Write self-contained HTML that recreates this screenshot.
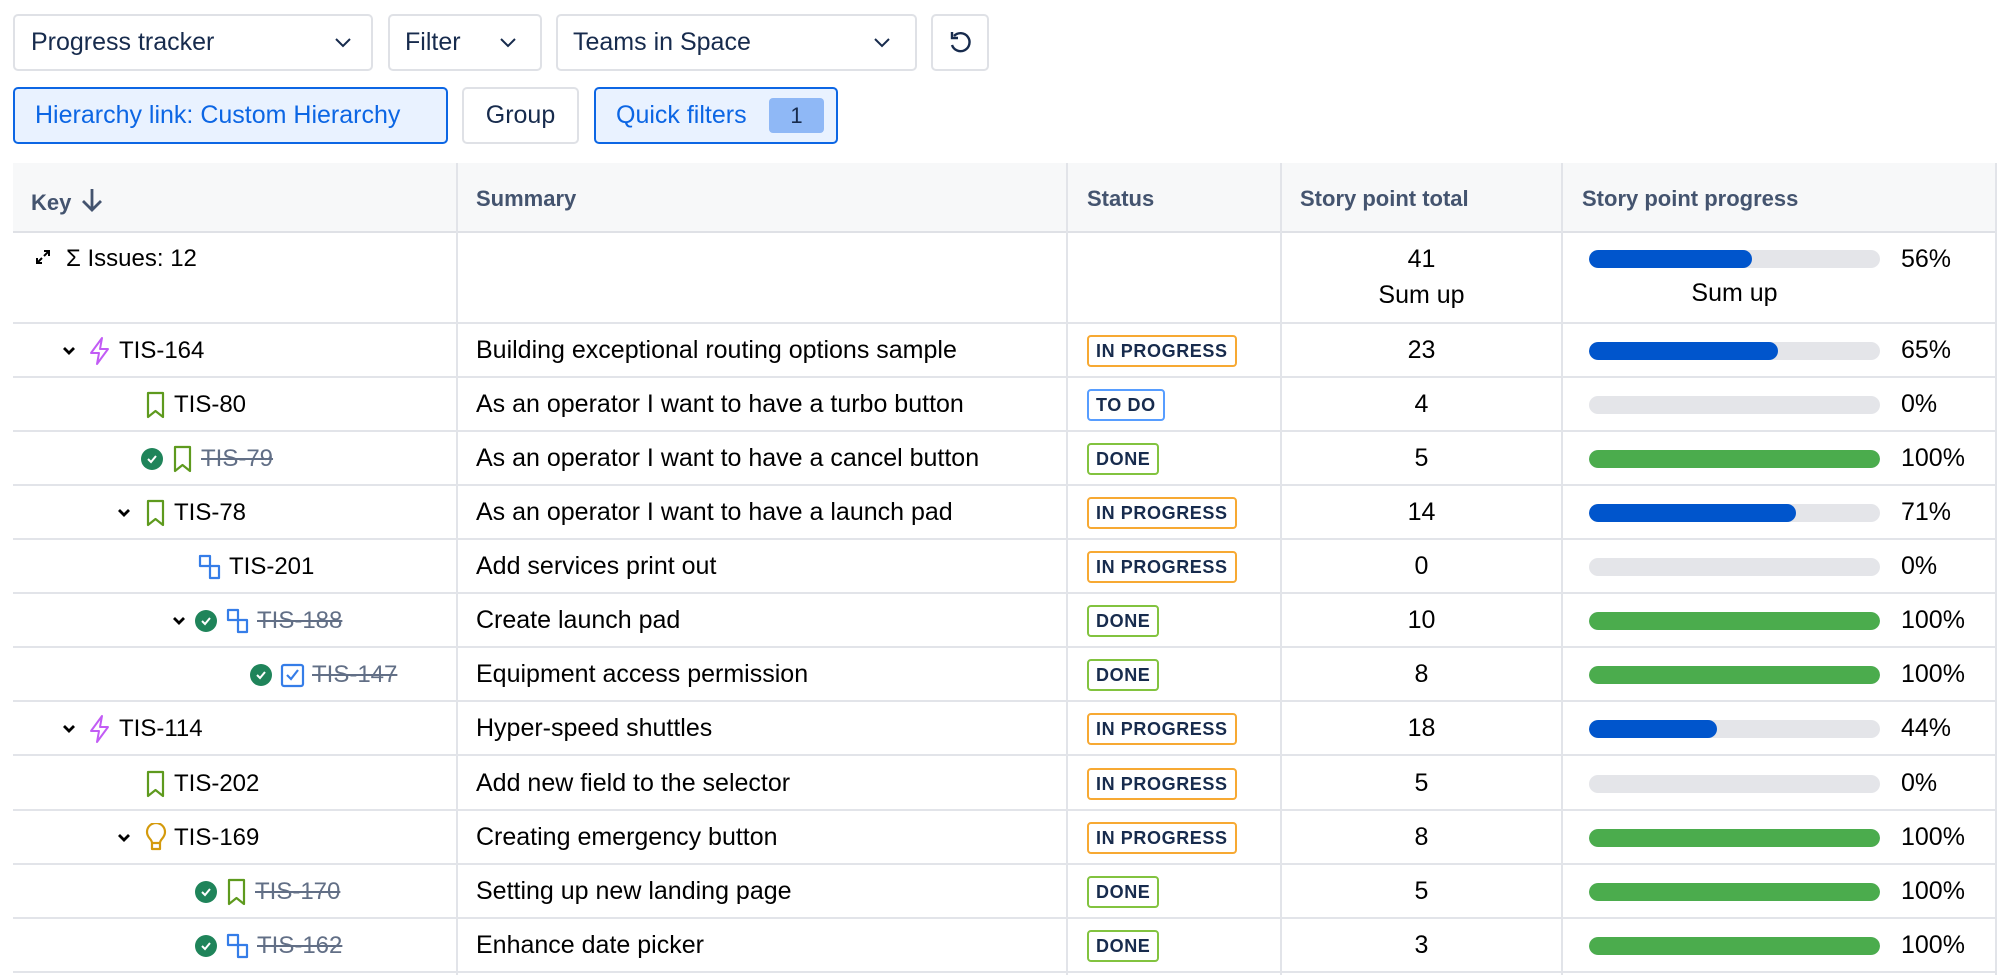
<!DOCTYPE html>
<html><head><meta charset="utf-8"><style>
*{box-sizing:border-box;margin:0;padding:0}
body{width:2000px;height:979px;background:#fff;font-family:"Liberation Sans",sans-serif;color:#172b4d;position:relative;overflow:hidden}
.btn{position:absolute;border:2px solid #dfe1e6;border-radius:5px;background:#fff;font-size:25px;display:flex;align-items:center;color:#172b4d}
.btn svg{position:absolute}
.sel{background:#e9f2ff;border:2px solid #0c66e4;color:#0c66e4}
.hdr{position:absolute;left:13px;top:163px;width:1983px;height:70px;background:#f7f8f9;border-bottom:2px solid #dfe1e6}
.ht{position:absolute;top:186px;font-weight:bold;font-size:22px;color:#44546f}
.vl{position:absolute;top:163px;height:812px;width:2px;background:#e2e4e9}
.r{position:absolute;left:13px;width:1983px;height:54px;border-bottom:2px solid #e2e4e9}
.r>*{position:absolute}
.k{display:flex;align-items:center;top:12px;font-size:24px;color:#000;white-space:nowrap}
.k .ck{margin-right:8px}
.k .ic{margin-right:6px}
.k s{color:#626f86}
.cv{top:18px}
.sm{left:463px;top:12px;font-size:25px;color:#000}
.lz{left:1074px;top:11px;height:32px;border:2px solid;border-radius:4px;font-weight:bold;font-size:18px;letter-spacing:.6px;padding:0 7px;display:flex;align-items:center;color:#172b4d}
.ip{border-color:#f7a933}.td{border-color:#579dff}.dn{border-color:#82c33f}
.n{left:1268px;width:281px;text-align:center;top:12px;font-size:25px;color:#000}
.bar{left:1576px;top:18px;width:291px;height:18px;border-radius:9px;background:#e4e5e9;overflow:hidden}
.bar i{display:block;height:100%;border-radius:9px}
.b{background:#0055cc}.g{background:#4bac4d}
.p{left:1888px;top:12px;font-size:25px;color:#000}
</style></head><body>
<div class="btn" style="left:13px;top:14px;width:360px;height:57px;padding-left:16px">Progress tracker<svg style="left:318px;top:20px" width="20" height="14" viewBox="0 0 20 14"><path d="M3 3l7 7 7-7" stroke="#172b4d" stroke-width="2" fill="none"/></svg></div>
<div class="btn" style="left:388px;top:14px;width:154px;height:57px;padding-left:15px">Filter<svg style="left:108px;top:20px" width="20" height="14" viewBox="0 0 20 14"><path d="M3 3l7 7 7-7" stroke="#172b4d" stroke-width="2" fill="none"/></svg></div>
<div class="btn" style="left:556px;top:14px;width:361px;height:57px;padding-left:15px">Teams in Space<svg style="left:314px;top:20px" width="20" height="14" viewBox="0 0 20 14"><path d="M3 3l7 7 7-7" stroke="#172b4d" stroke-width="2" fill="none"/></svg></div>
<div class="btn" style="left:931px;top:14px;width:58px;height:57px"><svg style="left:13px;top:13px" width="28" height="28" viewBox="0 0 28 28"><path d="M8 7A9 9 0 1 1 6 16" stroke="#172b4d" stroke-width="2.4" fill="none"/><path d="M6 3v6h6" stroke="#172b4d" stroke-width="2.4" fill="none"/></svg></div>
<div class="btn sel" style="left:13px;top:87px;width:435px;height:57px;padding-left:20px">Hierarchy link: Custom Hierarchy</div>
<div class="btn" style="left:462px;top:87px;width:117px;height:57px;justify-content:center">Group</div>
<div class="btn sel" style="left:594px;top:87px;width:244px;height:57px;padding-left:20px">Quick filters<div style="position:absolute;left:173px;top:9px;width:55px;height:35px;background:#8fb8f6;border-radius:4px;color:#172b4d;font-size:22px;display:flex;align-items:center;justify-content:center">1</div></div>

<div class="hdr"></div>
<div class="ht" style="left:31px;top:190px">Key</div>
<svg style="position:absolute;left:80px;top:186px" width="24" height="28" viewBox="0 0 24 28"><path d="M12 3v21M3 15l9 9 9-9" stroke="#44546f" stroke-width="2.8" fill="none"/></svg>
<div class="ht" style="left:476px">Summary</div>
<div class="ht" style="left:1087px">Status</div>
<div class="ht" style="left:1300px">Story point total</div>
<div class="ht" style="left:1582px">Story point progress</div>

<div class="r" style="top:233px;height:91px">
<svg style="left:22px;top:16px" width="16" height="16" viewBox="0 0 16 16"><path d="M2 14l5-5M2 9v5h5M14 2l-5 5M9 2h5v5" stroke="#000" stroke-width="2" fill="none"/></svg>
<div style="left:53px;top:12px;font-size:24px;color:#000">Σ Issues: 12</div>
<div style="left:1268px;width:281px;text-align:center;top:8px;font-size:25px;color:#000;line-height:36px">41<br>Sum up</div>
<div class="bar" style="top:17px"><i class="b" style="width:56%"></i></div>
<div class="p" style="top:12px">56%</div>
<div style="left:1576px;width:291px;text-align:center;top:46px;font-size:25px;color:#000">Sum up</div>
</div>

<div class="r" style="top:324px">
<svg class="cv" style="left:47px" width="18" height="18" viewBox="0 0 18 18"><path d="M4 6l5 5 5-5" stroke="#000" stroke-width="2.8" fill="none"/></svg>
<div class="k" style="left:74px"><svg class="ic" width="26" height="30" viewBox="0 0 26 30"><path d="M15 2L4 17h8l-2 11 11-15h-8z" stroke="#c25cf5" stroke-width="2" fill="none" stroke-linejoin="round"/></svg><span>TIS-164</span></div>
<div class="sm">Building exceptional routing options sample</div>
<div class="lz ip">IN PROGRESS</div><div class="n">23</div>
<div class="bar"><i class="b" style="width:65%"></i></div><div class="p">65%</div></div>

<div class="r" style="top:378px">
<div class="k" style="left:131px"><svg class="ic" width="24" height="30" viewBox="0 0 24 30"><path d="M4 3h15v24l-7.5-6L4 27z" stroke="#5e9a1e" stroke-width="2.2" fill="none" stroke-linejoin="round"/></svg><span>TIS-80</span></div>
<div class="sm">As an operator I want to have a turbo button</div>
<div class="lz td">TO DO</div><div class="n">4</div>
<div class="bar"></div><div class="p">0%</div></div>

<div class="r" style="top:432px">
<div class="k" style="left:128px"><svg class="ck" width="22" height="22" viewBox="0 0 22 22"><circle cx="11" cy="11" r="11" fill="#1f845a"/><path d="M7 11l3 3 5-6" stroke="#fff" stroke-width="2" fill="none"/></svg><svg class="ic" width="24" height="30" viewBox="0 0 24 30"><path d="M4 3h15v24l-7.5-6L4 27z" stroke="#5e9a1e" stroke-width="2.2" fill="none" stroke-linejoin="round"/></svg><s>TIS-79</s></div>
<div class="sm">As an operator I want to have a cancel button</div>
<div class="lz dn">DONE</div><div class="n">5</div>
<div class="bar"><i class="g" style="width:100%"></i></div><div class="p">100%</div></div>

<div class="r" style="top:486px">
<svg class="cv" style="left:102px" width="18" height="18" viewBox="0 0 18 18"><path d="M4 6l5 5 5-5" stroke="#000" stroke-width="2.8" fill="none"/></svg>
<div class="k" style="left:131px"><svg class="ic" width="24" height="30" viewBox="0 0 24 30"><path d="M4 3h15v24l-7.5-6L4 27z" stroke="#5e9a1e" stroke-width="2.2" fill="none" stroke-linejoin="round"/></svg><span>TIS-78</span></div>
<div class="sm">As an operator I want to have a launch pad</div>
<div class="lz ip">IN PROGRESS</div><div class="n">14</div>
<div class="bar"><i class="b" style="width:71%"></i></div><div class="p">71%</div></div>

<div class="r" style="top:540px">
<div class="k" style="left:184px"><svg class="ic" width="26" height="30" viewBox="0 0 26 30"><path d="M3 4h10v10H3zM13 14h9v12h-9zM13 9v5" stroke="#357de8" stroke-width="2.2" fill="none" stroke-linejoin="round"/></svg><span>TIS-201</span></div>
<div class="sm">Add services print out</div>
<div class="lz ip">IN PROGRESS</div><div class="n">0</div>
<div class="bar"></div><div class="p">0%</div></div>

<div class="r" style="top:594px">
<svg class="cv" style="left:157px" width="18" height="18" viewBox="0 0 18 18"><path d="M4 6l5 5 5-5" stroke="#000" stroke-width="2.8" fill="none"/></svg>
<div class="k" style="left:182px"><svg class="ck" width="22" height="22" viewBox="0 0 22 22"><circle cx="11" cy="11" r="11" fill="#1f845a"/><path d="M7 11l3 3 5-6" stroke="#fff" stroke-width="2" fill="none"/></svg><svg class="ic" width="26" height="30" viewBox="0 0 26 30"><path d="M3 4h10v10H3zM13 14h9v12h-9zM13 9v5" stroke="#357de8" stroke-width="2.2" fill="none" stroke-linejoin="round"/></svg><s>TIS-188</s></div>
<div class="sm">Create launch pad</div>
<div class="lz dn">DONE</div><div class="n">10</div>
<div class="bar"><i class="g" style="width:100%"></i></div><div class="p">100%</div></div>

<div class="r" style="top:648px">
<div class="k" style="left:237px"><svg class="ck" width="22" height="22" viewBox="0 0 22 22"><circle cx="11" cy="11" r="11" fill="#1f845a"/><path d="M7 11l3 3 5-6" stroke="#fff" stroke-width="2" fill="none"/></svg><svg class="ic" width="26" height="30" viewBox="0 0 26 30"><rect x="2" y="5" width="21" height="21" rx="2" stroke="#357de8" stroke-width="2.2" fill="none"/><path d="M7 15l4 4 7-9" stroke="#357de8" stroke-width="2.2" fill="none"/></svg><s>TIS-147</s></div>
<div class="sm">Equipment access permission</div>
<div class="lz dn">DONE</div><div class="n">8</div>
<div class="bar"><i class="g" style="width:100%"></i></div><div class="p">100%</div></div>

<div class="r" style="top:702px">
<svg class="cv" style="left:47px" width="18" height="18" viewBox="0 0 18 18"><path d="M4 6l5 5 5-5" stroke="#000" stroke-width="2.8" fill="none"/></svg>
<div class="k" style="left:74px"><svg class="ic" width="26" height="30" viewBox="0 0 26 30"><path d="M15 2L4 17h8l-2 11 11-15h-8z" stroke="#c25cf5" stroke-width="2" fill="none" stroke-linejoin="round"/></svg><span>TIS-114</span></div>
<div class="sm">Hyper-speed shuttles</div>
<div class="lz ip">IN PROGRESS</div><div class="n">18</div>
<div class="bar"><i class="b" style="width:44%"></i></div><div class="p">44%</div></div>

<div class="r" style="top:757px">
<div class="k" style="left:131px"><svg class="ic" width="24" height="30" viewBox="0 0 24 30"><path d="M4 3h15v24l-7.5-6L4 27z" stroke="#5e9a1e" stroke-width="2.2" fill="none" stroke-linejoin="round"/></svg><span>TIS-202</span></div>
<div class="sm">Add new field to the selector</div>
<div class="lz ip">IN PROGRESS</div><div class="n">5</div>
<div class="bar"></div><div class="p">0%</div></div>

<div class="r" style="top:811px">
<svg class="cv" style="left:102px" width="18" height="18" viewBox="0 0 18 18"><path d="M4 6l5 5 5-5" stroke="#000" stroke-width="2.8" fill="none"/></svg>
<div class="k" style="left:131px"><svg class="ic" width="24" height="30" viewBox="0 0 24 30"><path d="M8 20c0-4-5-5-5-11a9 9 0 0 1 18 0c0 6-5 7-5 11zM8 20v6h8v-6" stroke="#d49a0c" stroke-width="2.2" fill="none" stroke-linejoin="round"/></svg><span>TIS-169</span></div>
<div class="sm">Creating emergency button</div>
<div class="lz ip">IN PROGRESS</div><div class="n">8</div>
<div class="bar"><i class="g" style="width:100%"></i></div><div class="p">100%</div></div>

<div class="r" style="top:865px">
<div class="k" style="left:182px"><svg class="ck" width="22" height="22" viewBox="0 0 22 22"><circle cx="11" cy="11" r="11" fill="#1f845a"/><path d="M7 11l3 3 5-6" stroke="#fff" stroke-width="2" fill="none"/></svg><svg class="ic" width="24" height="30" viewBox="0 0 24 30"><path d="M4 3h15v24l-7.5-6L4 27z" stroke="#5e9a1e" stroke-width="2.2" fill="none" stroke-linejoin="round"/></svg><s>TIS-170</s></div>
<div class="sm">Setting up new landing page</div>
<div class="lz dn">DONE</div><div class="n">5</div>
<div class="bar"><i class="g" style="width:100%"></i></div><div class="p">100%</div></div>

<div class="r" style="top:919px">
<div class="k" style="left:182px"><svg class="ck" width="22" height="22" viewBox="0 0 22 22"><circle cx="11" cy="11" r="11" fill="#1f845a"/><path d="M7 11l3 3 5-6" stroke="#fff" stroke-width="2" fill="none"/></svg><svg class="ic" width="26" height="30" viewBox="0 0 26 30"><path d="M3 4h10v10H3zM13 14h9v12h-9zM13 9v5" stroke="#357de8" stroke-width="2.2" fill="none" stroke-linejoin="round"/></svg><s>TIS-162</s></div>
<div class="sm">Enhance date picker</div>
<div class="lz dn">DONE</div><div class="n">3</div>
<div class="bar"><i class="g" style="width:100%"></i></div><div class="p">100%</div></div>

<div class="vl" style="left:456px"></div>
<div class="vl" style="left:1066px"></div>
<div class="vl" style="left:1280px"></div>
<div class="vl" style="left:1561px"></div>
<div class="vl" style="left:1995px"></div>
</body></html>
